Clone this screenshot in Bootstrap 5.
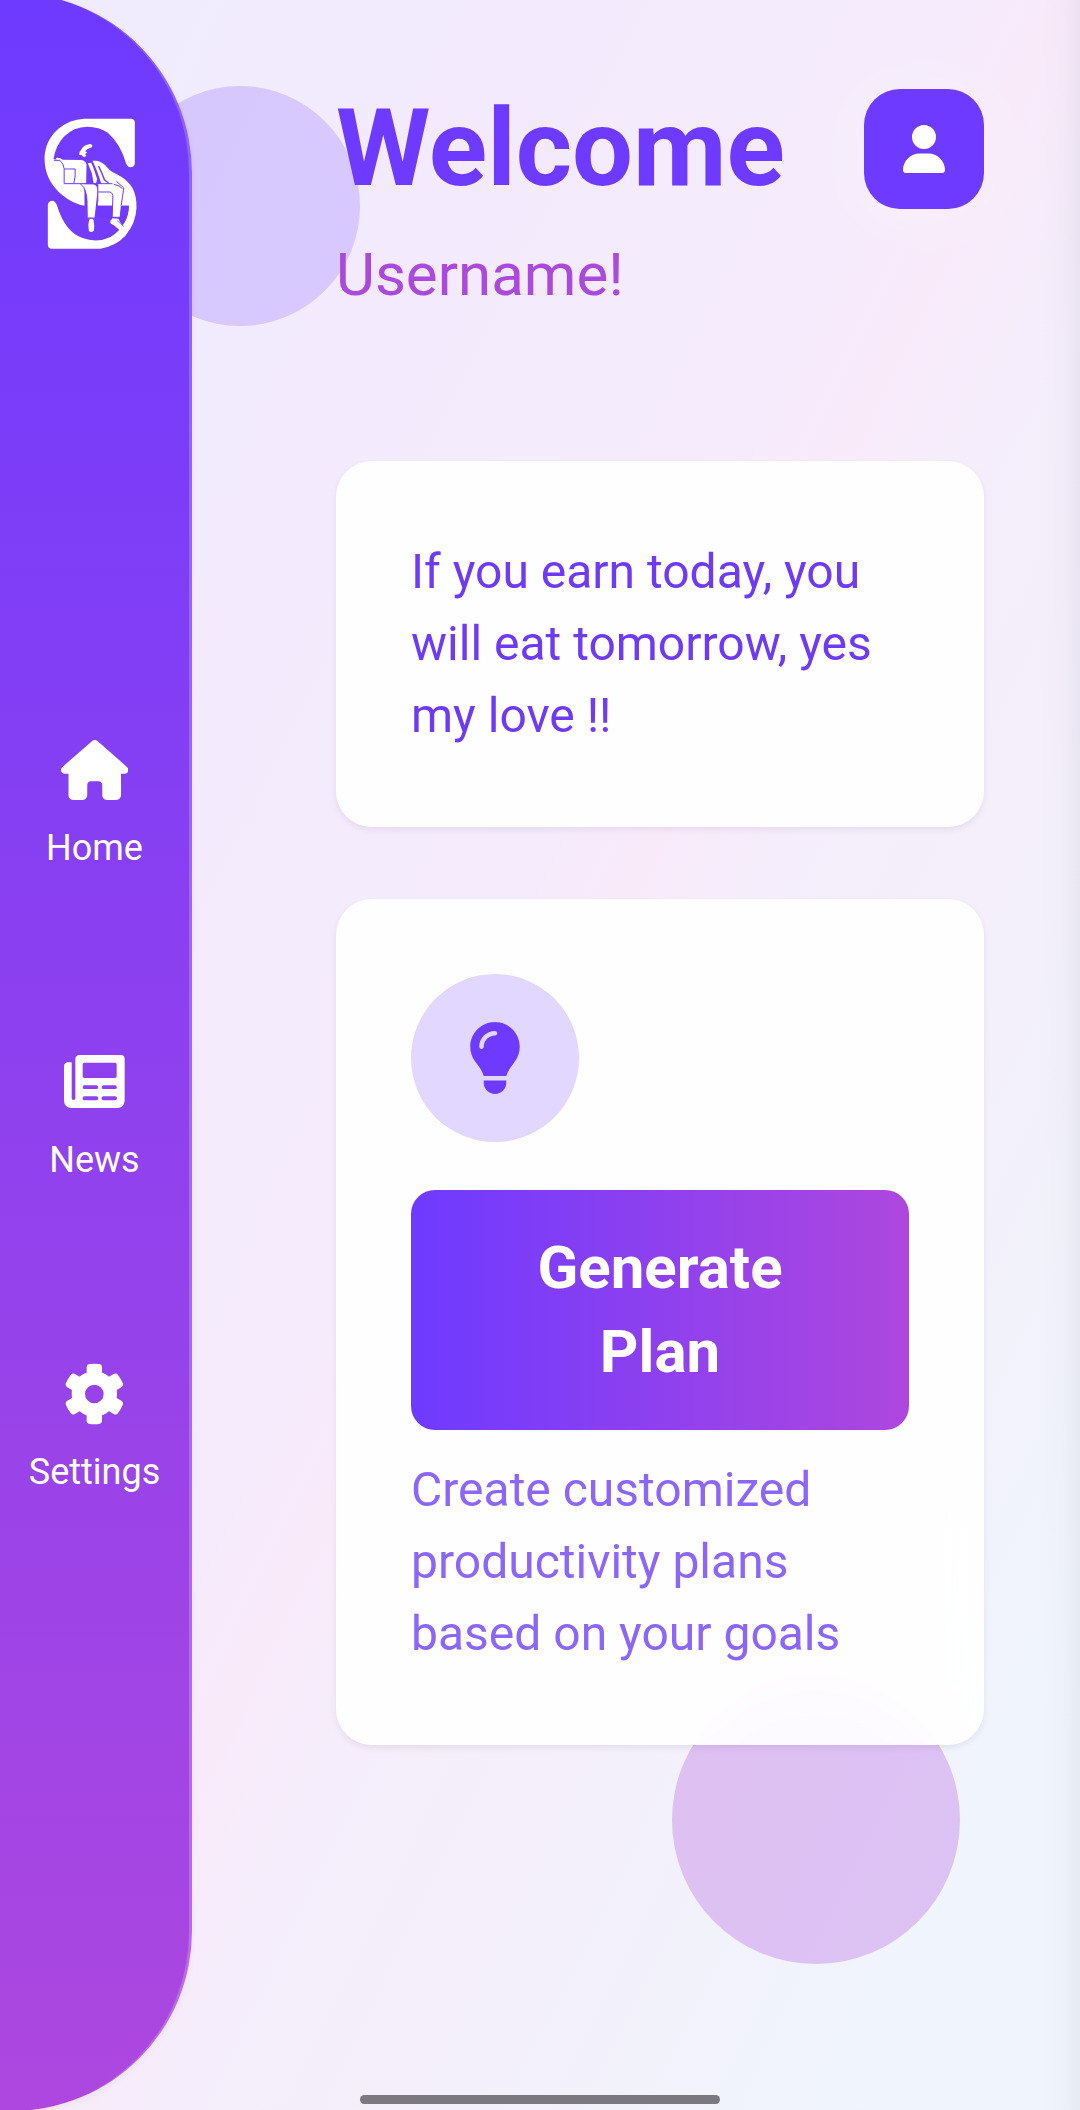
<!DOCTYPE html>
<html lang="en">
<head>
<meta charset="utf-8">
<meta name="viewport" content="width=device-width, initial-scale=1">
<title>Welcome</title>
<link href="https://cdn.jsdelivr.net/npm/bootstrap@5.3.0/dist/css/bootstrap.min.css" rel="stylesheet">
<style>
  :root { --brand: #6e3aff; --accent: #ad47df; }
  body { font-family: Roboto, sans-serif; margin: 0; }
  .app-screen {
    width: 1080px; height: 2110px;
    background: linear-gradient(116deg, #efecfe 0%, #f3ebfd 25%, #f5ebfc 45%, #f9eafa 50.5%, #f5edfb 56%, #f4effb 67%, #f2f2fb 78%, #f0f5fd 91%, #f0f5fd 100%);
  }
  .edge-shade { top: 0; right: 0; width: 42px; height: 100%; background: linear-gradient(90deg, rgba(60,60,90,0), rgba(60,60,90,.015) 60%, rgba(60,60,90,.06)); }
  .blob-top { left: 120px; top: 86px; width: 240px; height: 240px; background: rgba(108,56,255,.195); }
  .blob-bottom { left: 672px; top: 1676px; width: 288px; height: 288px; background: rgba(173,71,223,.29); }
  .side-rail {
    width: 192px; height: 2118px; margin-top: -7px; padding-top: 125px; z-index: 1;
    border-right: 3px solid rgba(255,255,255,.2);
    border-radius: 0 180px 180px 0;
    background: linear-gradient(180deg, #6e3aff, #ad47df) border-box;
    box-shadow: 0 2px 6px rgba(60,40,100,.05);
  }
  .rail-logo { width: 120px; height: 131.33px; margin-bottom: 490.67px; }
  .rail-nav { gap: 177px; }
  .rail-item { gap: 21px; font-size: 36px; line-height: 54px; color: #fff; text-decoration: none; }
  .main-pane { padding: 83px 96px 0 144px; }
  .title-big { font-size: 108px; line-height: 130px; color: var(--brand); }
  .title-user { font-size: 60px; line-height: 72px; margin-top: 26px; color: #ab49dc; }
  .avatar-btn {
    width: 120px; height: 120px; margin-top: 6px; border: 0; border-radius: 36px; background: var(--brand);
    box-shadow: 0 6px 60px 6px rgba(255,255,255,.3);
  }
  .panel {
    --bs-card-border-width: 0;
    padding: 75px; border-radius: 36px; background: rgba(255,255,255,.92);
    backdrop-filter: blur(24px);
    box-shadow: 0 3px 6px rgba(60,30,90,.08);
    font-size: 48px; line-height: 72px;
  }
  .panel-quote { margin-top: 150px; color: #6e3af8; }
  .panel-plan { margin-top: 72px; color: #8c65fb; }
  .bulb-disc { width: 168px; height: 168px; background: #e1d7ff; }
  .plan-btn {
    margin: 48px 0 24px; padding: 36px 72px; border: 0; border-radius: 24px;
    font-size: 60px; line-height: 84px; font-weight: 700; color: #fff;
    background: linear-gradient(90deg, var(--brand), #ae47de);
  }
  .home-bar { left: 360px; bottom: 6px; width: 360px; height: 9px; background: #7b787f; z-index: 2; }
</style>
<script src="https://cdn.jsdelivr.net/npm/bootstrap@5.3.0/dist/js/bootstrap.bundle.min.js"></script>
</head>
<body>
<div class="app-screen position-relative overflow-hidden d-flex align-items-start">
  <div class="blob-top position-absolute rounded-circle"></div>
  <div class="blob-bottom position-absolute rounded-circle"></div>
  <div class="edge-shade position-absolute"></div>

  <aside class="side-rail position-relative flex-shrink-0 d-flex flex-column align-items-center">
    <svg class="rail-logo flex-shrink-0" viewBox="13.5 40 360 394" fill="#fff" role="img" aria-label="Logo">
      <!-- upper bowl with serif, running into the armchair -->
      <path d="M160 42H302Q313 43 313 54V176Q312 188 300 188Q290 187 286 174Q270 118 232 84Q206 66 170 66Q130 66 100 96Q76 122 69 163L78 165L76 160Q86 157 97 165L150 166Q164 167 168 178L167 236H162L163 303Q130 300 96 272Q42 228 42 160Q44 106 84 72Q118 44 160 42Z"/>
      <!-- jacket and lower bowl with serif -->
      <path d="M186 168L198 168Q216 170 232 190Q242 202 262 210Q290 224 306 250Q319 274 318 310Q316 356 284 394Q256 424 210 432H64Q52 431 52 420V300Q54 288 66 288Q76 290 80 304Q104 382 156 400Q200 416 240 397Q294 362 295 303H202V238L212 236Q200 196 186 168Z"/>
      <!-- hair -->
      <path d="M185 121Q187 128 180 129Q168 132 164 140L170 143L164 148L168 153L161 158L154 152L146 150Q144 144 151 137Q156 124 170 120Q180 116 185 121Z"/>
      <!-- tie -->
      <path d="M172 176L182 174L189 190L200 224L196 238L189 234L184 206Z"/>
      <!-- legs -->
      <path d="M150 239H188Q201 242 201 258L192 341H172L171 290Q170 250 150 239ZM206 240H258Q281 242 281 258L268 338H245L246 270Z"/>
      <!-- shoes -->
      <path d="M176 345Q182 340 189 345Q193 364 190 378Q182 386 175 378Q171 362 176 345ZM240 345L246 341L264 342Q266 352 278 364L269 378Q256 364 240 356Z"/>
      <g fill="none" stroke="#7139fe" stroke-width="3" stroke-linejoin="round">
        <path d="M70 167H88Q99 176 101 192V237H246M101 193H134V214L130 236M150 238Q163 246 164 262V304"/>
        <path d="M204 184Q216 208 222 226L234 235" stroke-width="4.500"/>
        <path d="M258 230L280 250L276 276L272 303M250 239Q268 242 276 252"/>
        <path d="M202 240V290M204 262H238Q248 264 247 280L245 340"/>
        <path d="M172 340H194M246 338H270"/>
        <path d="M259 347L280 366" stroke-width="2"/>
      </g>
      <path d="M200 303H244V345H238L196 330ZM271 303H295Q294 340 276 361L267 344Z" fill="#7139fe"/>
    </svg>

    <nav class="rail-nav d-flex flex-column align-items-center">
      <a class="rail-item d-flex flex-column align-items-center" href="#">
        <svg width="67.5" height="60" viewBox="0 0 576 512" fill="#fff"><path d="M575.8 255.5c0 18-15 32.1-32 32.1h-32l.7 160.2c0 2.7-.2 5.4-.5 8.1V472c0 22.1-17.9 40-40 40H392c-22.1 0-40-17.9-40-40V384c0-17.7-14.3-32-32-32H256c-17.7 0-32 14.3-32 32v88c0 22.1-17.9 40-40 40H104c-22.1 0-40-17.9-40-40V287.600H32c-18 0-32-14-32-32.100c0-9 3-17 10-24L266.400 8c7-7 15-8 22-8s15 2 21 7L564.800 231.500c8 7 12 15 11 24z"/></svg>
        <span>Home</span>
      </a>
      <a class="rail-item d-flex flex-column align-items-center" href="#">
        <svg class="overflow-visible" width="60" height="60" viewBox="133 66 180 180" fill="#fff"><path fill-rule="evenodd" d="M179 75H303Q315 75 315 87V212Q313 232 293 234H156Q134 232 133 212V109Q134 98 145 97H156V205Q156 210 161.500 210Q167 210 167 205V87Q168 76 179 75ZM194 98Q189 98 189 103V139Q189 144 194 144H286Q291 144 291 139V103Q291 98 286 98ZM194.500 166a5.500 5.500 0 0 0 0 11H230a5.500 5.500 0 0 0 0-11ZM251.500 166a5.500 5.500 0 0 0 0 11H286a5.500 5.500 0 0 0 0-11ZM194.500 199a6 6 0 0 0 0 12H230a6 6 0 0 0 0-12ZM251.500 199a6 6 0 0 0 0 12H286a6 6 0 0 0 0-12Z"/></svg>
        <span>News</span>
      </a>
      <a class="rail-item d-flex flex-column align-items-center" href="#">
        <svg class="overflow-visible" width="60" height="60" viewBox="-91 -90 180 180" fill="#fff">
          <defs><path id="gear-tooth" d="M-23-55V-82Q-22-89-15-90Q0-92 15-90Q22-89 23-82V-55Z"/></defs>
          <circle r="48" fill="none" stroke="#fff" stroke-width="40"/>
          <use href="#gear-tooth"/><use href="#gear-tooth" transform="rotate(60)"/><use href="#gear-tooth" transform="rotate(120)"/><use href="#gear-tooth" transform="rotate(180)"/><use href="#gear-tooth" transform="rotate(240)"/><use href="#gear-tooth" transform="rotate(300)"/>
        </svg>
        <span>Settings</span>
      </a>
    </nav>
  </aside>

  <main class="main-pane flex-grow-1 position-relative">
    <header class="d-flex justify-content-between align-items-start">
      <div>
        <h1 class="title-big fw-bold mb-0">Welcome</h1>
        <p class="title-user mb-0">Username!</p>
      </div>
      <button class="avatar-btn d-flex align-items-center justify-content-center p-0" type="button" aria-label="Profile">
        <svg width="42" height="48" viewBox="0 0 448 512" fill="#fff"><path d="M224 256A128 128 0 1 0 224 0a128 128 0 1 0 0 256zm-45.700 48C79.800 304 0 383.800 0 482.300C0 498.700 13.300 512 29.700 512H418.300c16.400 0 29.700-13.300 29.700-29.700C448 383.800 368.200 304 269.700 304H178.300z"/></svg>
      </button>
    </header>

    <section class="card panel panel-quote">
      <p class="mb-0">If you earn today, you will eat tomorrow, yes my love !!</p>
    </section>

    <section class="card panel panel-plan">
      <div class="bulb-disc rounded-circle d-flex align-items-center justify-content-center">
        <svg width="54" height="72" viewBox="0 0 384 512" fill="#6e3aff"><path d="M272 384c9.600-31.900 29.500-59.100 49.200-86.200c5.200-7.100 10.400-14.200 15.400-21.400c19.800-28.500 31.400-63 31.400-100.300C368 78.800 289.200 0 192 0S16 78.800 16 176c0 37.300 11.600 71.900 31.400 100.300c5 7.200 10.200 14.300 15.400 21.400c19.800 27.100 39.700 54.400 49.200 86.200H272zM192 512c44.200 0 80-35.800 80-80V416H112v16c0 44.200 35.800 80 80 80zM112 176c0 8.800-7.200 16-16 16s-16-7.200-16-16c0-61.900 50.100-112 112-112c8.800 0 16 7.200 16 16s-7.200 16-16 16c-44.200 0-80 35.800-80 80z"/></svg>
      </div>
      <button class="btn plan-btn" type="button">Generate Plan</button>
      <p class="mb-0">Create customized productivity plans based on your goals</p>
    </section>
  </main>

  <div class="home-bar position-absolute rounded-pill"></div>
</div>
</body>
</html>
